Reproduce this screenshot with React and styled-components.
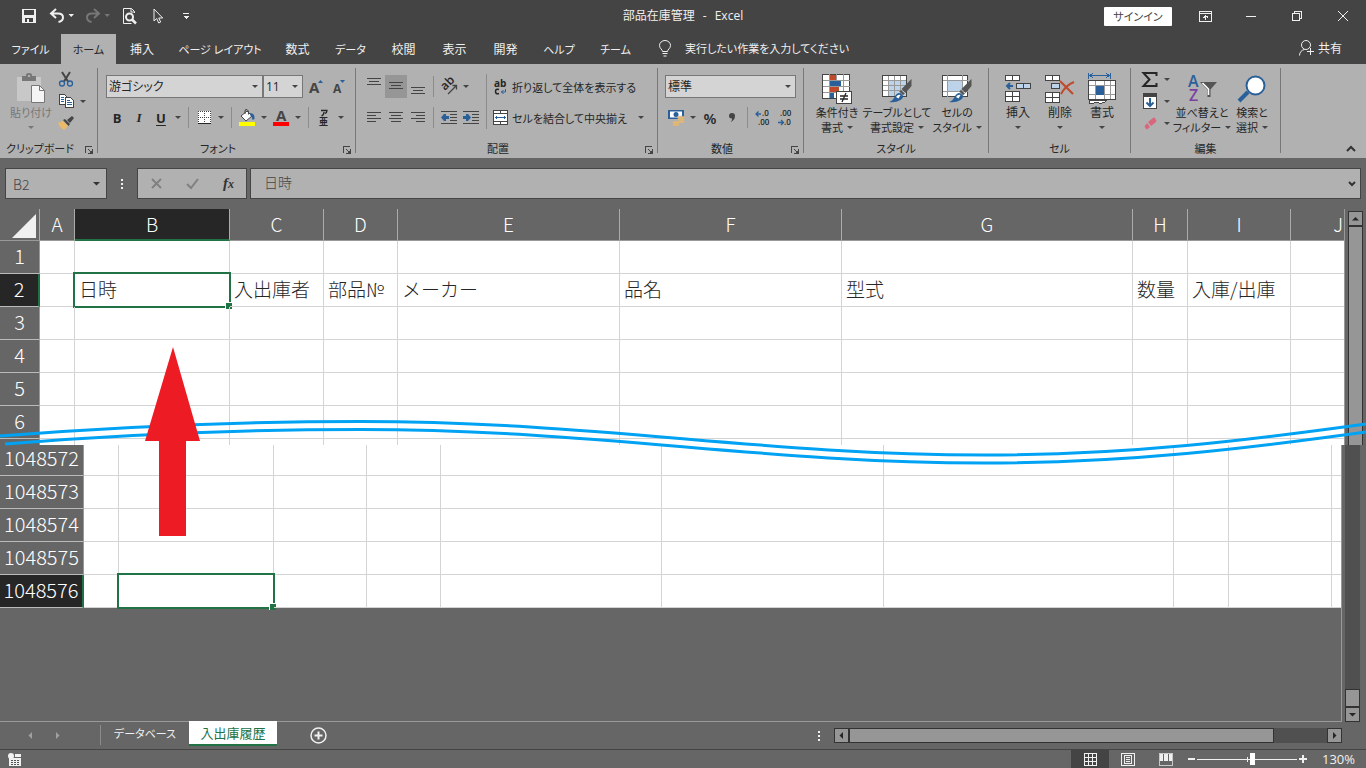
import React from 'react';
import styled, { createGlobalStyle } from 'styled-components';

const GlobalStyle = createGlobalStyle`
  * {
    box-sizing: border-box;
  }

  body {
    margin: 0;
    background: #666666;
  }

  body, button, input, select {
    font-family: 'Open Sans', 'Noto Sans CJK JP', sans-serif;
    font-size: 12px;
    font-feature-settings: 'palt';
  }

  button, input, select {
    margin: 0;
    padding: 0;
    border: 0;
    color: inherit;
    background: none;
  }

  svg {
    display: block;
    flex: none;
    overflow: visible;
  }
`;

const Window = styled.div`
  display: flex;
  flex-direction: column;
  min-height: 100vh;
  overflow: hidden;
  background: #666666;
  color: #262626;
`;

/* ---------- title bar ---------- */

const TitleBar = styled.header`
  display: grid;
  grid-template-columns: 1fr auto 1fr;
  align-items: center;
  height: 32px;
  background: #444444;
  color: #f0f0f0;
`;

const QuickAccess = styled.div`
  display: flex;
  padding-left: 14px;
`;

const QuickButton = styled.button`
  display: flex;
  align-items: center;
  justify-content: center;
  width: ${(props) => props.$w || 28}px;
  height: 32px;
`;

const Title = styled.h1`
  display: flex;
  gap: 8px;
  margin: 0;
  font-size: 12px;
  font-weight: 400;
  line-height: 16px;
`;

const WindowControls = styled.div`
  display: flex;
  align-items: center;
  justify-content: flex-end;
`;

const SignIn = styled.button`
  width: 68px;
  height: 19px;
  margin-right: 10px;
  border-radius: 1px;
  background: #ffffff;
  color: #444444;
  font-size: 11px;
  line-height: 19px;
`;

const WindowButton = styled(QuickButton)`
  width: 46px;
`;

/* ---------- ribbon tabs ---------- */

const TabRow = styled.nav`
  display: flex;
  height: 32px;
  background: #444444;
  color: #f0f0f0;
`;

const Tab = styled.button`
  display: flex;
  flex: none;
  align-items: center;
  justify-content: center;
  width: ${(props) => props.$w}px;
  height: 30px;
  margin-top: 2px;
  padding-bottom: 1px;
  font-size: ${(props) => (props.$kana ? 11 : 12)}px;
  white-space: nowrap;
  background: ${(props) => (props.$active ? '#b1b1b1' : 'none')};
  color: ${(props) => (props.$active ? '#262626' : '#f0f0f0')};
`;

const TellMe = styled.label`
  display: flex;
  align-items: center;
  gap: 14px;
  padding-left: 15px;

  input {
    width: 200px;
    outline: none;
    font-size: 11px;
  }

  input::placeholder {
    color: #f0f0f0;
    opacity: 1;
  }
`;

const Share = styled.button`
  display: flex;
  align-items: center;
  gap: 4px;
  margin-left: auto;
  margin-right: 24px;
`;

/* ---------- ribbon ---------- */

const Ribbon = styled.section`
  display: flex;
  height: 94px;
  padding-top: 4px;
  background: #b1b1b1;
`;

const Group = styled.div`
  display: grid;
  grid-template-rows: 70px 15px;
  flex: none;
  width: ${(props) => props.$w}px;
  height: 85px;
  border-right: 1px solid #777777;
`;

const GroupBody = styled.div`
  display: flex;
  padding-left: ${(props) => props.$pad || 7}px;
`;

const GroupFooter = styled.div`
  display: flex;
  align-items: center;
  height: 20px;
  font-size: 11px;

  span {
    flex: 1;
    text-align: center;
    white-space: nowrap;
  }
`;

const Launcher = styled.button`
  width: 17px;
  height: 20px;
  padding: 4px 0 0 5px;
`;

const Column = styled.div`
  display: flex;
  flex-direction: column;
  padding-top: ${(props) => (props.$small ? 0 : 3)}px;
`;

const Row = styled.div`
  display: flex;
  align-items: center;
  gap: ${(props) => props.$gap || 0}px;
  height: ${(props) => (props.$small ? 22 : 31)}px;
`;

const Tool = styled.button`
  display: flex;
  flex: none;
  align-items: center;
  justify-content: center;
  width: ${(props) => props.$w || 22}px;
  height: ${(props) => (props.$small ? 22 : 23)}px;
  background: ${(props) => (props.$active ? '#969696' : 'none')};
`;

const CaretButton = styled(Tool)`
  width: 12px;
`;

const Letter = styled.span`
  font-size: ${(props) => (props.$large ? 15 : 13)}px;
  font-weight: ${(props) => (props.$large ? 600 : 700)};
  font-style: ${(props) => (props.$italic ? 'italic' : 'normal')};
  font-family: ${(props) => (props.$italic ? "'Liberation Serif', serif" : 'inherit')};
  text-decoration: ${(props) => (props.$underline ? 'underline' : 'none')};
  text-underline-offset: 2px;
`;

const Separator = styled.i`
  flex: none;
  width: 1px;
  height: 21px;
  margin: 0 4px;
  background: #8c8c8c;
`;

const TallSeparator = styled(Separator)`
  height: 55px;
  margin-top: 6px;
`;

const TextTool = styled.button`
  display: flex;
  align-items: center;
  gap: 4px;
  height: 23px;
  padding-left: 2px;
  font-size: 11px;
  white-space: nowrap;
`;

const BigButton = styled.button`
  display: flex;
  flex: none;
  flex-direction: column;
  align-items: center;
  width: ${(props) => props.$w}px;
  padding-top: 4px;
  color: ${(props) => (props.$disabled ? '#777777' : '#262626')};
  font-size: ${(props) => (props.$kana ? 11 : 12)}px;
  line-height: 15px;
  white-space: nowrap;
`;

const BigIcon = styled.span`
  display: flex;
  align-items: center;
  justify-content: center;
  height: 33px;
`;

const BigLine = styled.span`
  display: flex;
  align-items: center;
  gap: 4px;
  height: 15px;
`;

const SelectBox = styled.label`
  display: grid;
  grid-template-columns: 1fr 14px;
  align-items: center;
  width: ${(props) => props.$w}px;
  height: 23px;
  border: 1px solid #777777;
  background: #d4d4d4;

  select {
    grid-area: 1 / 1 / 2 / 3;
    height: 21px;
    padding-left: 2px;
    appearance: none;
  }

  svg {
    grid-area: 1 / 2 / 2 / 3;
    justify-self: end;
    margin-right: 4px;
    pointer-events: none;
  }
`;

const Collapse = styled.button`
  align-self: flex-end;
  margin: 0 10px 6px auto;
`;

/* ---------- formula bar ---------- */

const FormulaBar = styled.section`
  display: flex;
  height: 51px;
  padding: 10px 5px 0;
`;

const FormulaBox = styled.div`
  display: flex;
  align-items: center;
  width: ${(props) => props.$w};
  flex: ${(props) => (props.$grow ? '1' : 'none')};
  height: 31px;
  margin-left: ${(props) => props.$gap || 0}px;
  border: 1px solid #444444;
  background: #b1b1b1;
  color: #444444;

  input {
    flex: 1;
    min-width: 0;
    outline: none;
    font-family: 'Noto Sans CJK JP', sans-serif;
    font-size: 14px;
    font-weight: 300;
    padding-left: ${(props) => (props.$grow ? 13 : 7)}px;
    padding-bottom: ${(props) => (props.$grow ? 3 : 0)}px;
  }
`;

const FormulaButton = styled.button`
  display: flex;
  align-items: center;
  justify-content: center;
  width: ${(props) => props.$w || 36}px;
  height: 29px;
`;

const Grip = styled.i`
  width: 30px;
  display: flex;
  flex-direction: column;
  align-items: center;
  justify-content: center;
  gap: 2px;
  height: ${(props) => props.$h || 31}px;

  &::before, &::after, b {
    content: '';
    width: 2px;
    height: 2px;
    background: #f0f0f0;
  }
`;

/* ---------- sheet ---------- */

const Sheet = styled.main`
  position: relative;
  display: flex;
  flex: 1;
  flex-direction: column;
`;

const Pane = styled.div`
  display: flex;
  flex: ${(props) => (props.$grow ? '1' : 'none')};
`;

const PaneArea = styled.div`
  flex: 1;
  min-width: 0;
  overflow: hidden;
  height: ${(props) => (props.$h ? `${props.$h}px` : 'auto')};
  border-right: 1px solid #999999;
  border-bottom: ${(props) => (props.$h ? 'none' : '1px solid #999999')};
`;

const TailClip = styled.div`
  display: flex;
  flex-direction: column;
  justify-content: flex-end;
  height: 165px;
  padding-bottom: 2px;
  overflow: hidden;
`;

const Table = styled.table`
  width: 100%;
  table-layout: fixed;
  border-collapse: separate;
  border-spacing: 0;
  background: #ffffff;
  color: #262626;
  font-family: 'Noto Sans CJK JP', sans-serif;
  font-size: 19px;
  font-weight: 300;
  font-feature-settings: normal;
`;

const HeadCell = styled.th`
  height: 32px;
  padding: 0 ${(props) => (props.$last ? 1 : 0)}px ${(props) => (props.$active ? 1 : 2)}px 0;
  overflow: hidden;
  border-right: 1px solid #ababab;
  border-bottom: ${(props) => (props.$active ? '2px solid #217346' : '1px solid #999999')};
  background: ${(props) => (props.$active ? '#262626' : '#666666')};
  color: #ffffff;
  font-weight: 300;
  line-height: 26px;
  text-align: ${(props) => (props.$last ? 'right' : 'center')};

  &:last-child {
    border-right: 0;
  }
`;

const Corner = styled(HeadCell)`
  padding-bottom: 0;

  svg {
    margin: 2px 3px 0 auto;
  }
`;

const RowHead = styled.th`
  height: 33px;
  padding: 0 0 2px;
  border-right: ${(props) => (props.$active ? '2px solid #217346' : '1px solid #999999')};
  border-bottom: 1px solid #bbbbbb;
  background: ${(props) => (props.$active ? '#262626' : '#666666')};
  color: #ffffff;
  font-size: 20px;
  font-weight: 300;
  line-height: 28px;
`;

const Cell = styled.td`
  position: relative;
  height: 33px;
  padding: 0 0 3px 4px;
  border-right: 1px solid #d4d4d4;
  border-bottom: 1px solid #d4d4d4;
  line-height: 28px;
  white-space: nowrap;

  &:last-child {
    border-right: 0;
  }
`;

const Selection = styled.span`
  position: absolute;
  inset: -2px;
  border: 2px solid #217346;

  &::after {
    content: '';
    position: absolute;
    right: -3px;
    bottom: -3px;
    width: 6px;
    height: 6px;
    border-top: 1px solid #ffffff;
    border-left: 1px solid #ffffff;
    background: #217346;
  }
`;

const VerticalBar = styled.div`
  display: flex;
  flex-direction: column;
  width: ${(props) => props.$w}px;
  padding: ${(props) => props.$pad};
`;

const ScrollTrack = styled.div`
  display: flex;
  flex: 1;
  flex-direction: ${(props) => (props.$horizontal ? 'row' : 'column')};
  justify-content: ${(props) => (props.$end ? 'flex-end' : 'flex-start')};
  background: #505050;
`;

const ScrollThumb = styled.div`
  flex: ${(props) => props.$size};
  border: 1px solid #333333;
  border-bottom-width: ${(props) => (props.$open ? 0 : 1)}px;
  background: #969696;
`;

const ScrollButton = styled.button`
  display: flex;
  flex: none;
  align-items: center;
  justify-content: center;
  width: 15px;
  height: 15px;
  border: 1px solid #333333;
  background: #969696;
`;

const Wave = styled.svg`
  position: absolute;
  top: 205px;
  left: 0;
  width: 100%;
  height: 60px;
`;

const Arrow = styled.svg`
  position: absolute;
  top: 138px;
  left: 145px;
`;

/* ---------- sheet tabs and status bar ---------- */

const SheetBar = styled.nav`
  display: flex;
  height: 27px;
  color: #f0f0f0;
`;

const SheetNav = styled.div`
  display: flex;
  align-items: center;
  gap: 20px;
  width: 101px;
  height: 20px;
  margin-top: 3px;
  padding-left: 27px;
  border-right: 1px solid #8c8c8c;
`;

const SheetTab = styled.button`
  position: relative;
  width: 88px;
  height: 25px;
  margin-top: -1px;
  font-size: ${(props) => (props.$active ? 13 : 11)}px;
  white-space: nowrap;
  color: ${(props) => (props.$active ? '#217346' : '#f0f0f0')};
  background: ${(props) => (props.$active ? '#ffffff' : 'none')};
  border-bottom: 2px solid ${(props) => (props.$active ? '#217346' : 'transparent')};
`;

const AddSheet = styled.button`
  display: flex;
  align-items: center;
  justify-content: center;
  width: 82px;
  height: 26px;
`;

const HorizontalBar = styled.div`
  display: flex;
  width: 508px;
  height: 15px;
  margin: 6px 24px 0 0;
`;

const Spacer = styled.i`
  flex: 1;
`;

const StatusBar = styled.footer`
  display: flex;
  align-items: center;
  height: 19px;
  border-top: 1px solid #444444;
  padding: 0 11px 0 8px;
  color: #f0f0f0;
`;

const ViewButton = styled.button`
  display: flex;
  align-items: center;
  justify-content: center;
  width: 38px;
  height: 18px;
  background: ${(props) => (props.$active ? '#444444' : 'none')};
`;

const ZoomButton = styled.button`
  width: 12px;
  height: 18px;
  display: flex;
  align-items: center;
  justify-content: center;
`;

const ZoomSlider = styled.input`
  width: 100px;
  height: 18px;
  appearance: none;
  background:
    linear-gradient(#f0f0f0, #f0f0f0) 50% 50% / 1px 5px no-repeat,
    linear-gradient(#f0f0f0, #f0f0f0) 50% 50% / 100% 1px no-repeat;

  &::-webkit-slider-thumb {
    appearance: none;
    width: 5px;
    height: 12px;
    background: #ffffff;
  }
`;

const ZoomValue = styled.button`
  width: 46px;
  font-size: 13px;
  line-height: 18px;
  text-align: right;
`;

/* ---------- icons ---------- */

const Icon = ({ w, h, smooth, children }) => (
  <svg
    width={w}
    height={h}
    viewBox={`0 0 ${w} ${h}`}
    fill="none"
    shapeRendering={smooth ? 'auto' : 'crispEdges'}
    aria-hidden="true"
  >
    {children}
  </svg>
);

const Caret = ({ color = '#444444' }) => (
  <Icon w={6} h={3} smooth><path d="M0 0h6L3 3z" fill={color} /></Icon>
);

const SaveIcon = () => (
  <Icon w={14} h={14}>
    <path d="M0 0h14v14H0zM2 1v5h10V1zM3 9v4h2v-3h2v3h4V9z" fill="#f0f0f0" fillRule="evenodd" />
  </Icon>
);

const UndoIcon = ({ color, flip }) => (
  <Icon w={24} h={14} smooth>
    <g transform={flip ? 'matrix(-1 0 0 1 14 0)' : undefined}>
      <path d="M6 0L1 4.500l5 4.500M1.500 4.500H8c3.500 0 5 1.500 5 4s-2 4-4.500 4.500" stroke={color} strokeWidth="2" />
    </g>
    <path d="M18.500 5h5.500l-2.750 3z" fill={color} />
  </Icon>
);

const PreviewIcon = () => (
  <Icon w={15} h={16} smooth>
    <path d="M11.500 5V3.500L8.500.500h-8v15h8M8 .500V4h3.500" stroke="#f0f0f0" />
    <circle cx="6.500" cy="9" r="3.500" stroke="#f0f0f0" strokeWidth="2" />
    <path d="M9 11.500l4 4" stroke="#f0f0f0" strokeWidth="2.500" />
  </Icon>
);

const PointerIcon = () => (
  <Icon w={11} h={16} smooth>
    <path d="M1 1v12l2.700-2.500 2 4.500 2-1-2-4h4z" stroke="#f0f0f0" />
  </Icon>
);

const MoreIcon = () => (
  <Icon w={6} h={6}><path d="M0 0h6v1H0zM0 3h6L3 6z" fill="#f0f0f0" /></Icon>
);

const RibbonIcon = () => (
  <Icon w={13} h={11}>
    <path d="M.500.500h12v10H.500zM0 2.500h13M6.500 4v5M4 6.500h1v-1h3v1h1" stroke="#f0f0f0" />
  </Icon>
);

const BulbIcon = () => (
  <Icon w={12} h={17} smooth>
    <path d="M3.500 11.500c0-2-3-3-3-6a5.500 5 0 0 1 11 0c0 3-3 4-3 6zM3.500 13.500h5M4.500 16h3" stroke="#f0f0f0" />
  </Icon>
);

const ShareIcon = () => (
  <Icon w={15} h={16} smooth>
    <circle cx="7" cy="5" r="4.500" stroke="#f0f0f0" />
    <path d="M.500 15.500c0-3 2-5.500 5-6M11.500 8v7M8 11.500h7" stroke="#f0f0f0" />
  </Icon>
);

const LauncherIcon = () => (
  <Icon w={8} h={8}>
    <path d="M.500 7V.500H7M3 3l3 3M7.500 3v4.500H3" stroke="#444444" />
    <path d="M4 7h3V4z" fill="#444444" />
  </Icon>
);

const PasteIcon = () => (
  <Icon w={28} h={31} smooth>
    <path d="M0 4h24v24H0z" fill="#c8c8c8" />
    <path d="M5 3h4V2q0-2 3-2t3 2v1h4v5H5zM11 2h2v2h-2z" fill="#777777" fillRule="evenodd" />
    <path d="M14.500 12.500h8l5 5v12h-13z" fill="#f5f5f5" stroke="#777777" />
    <path d="M22.500 12.500v5h5" stroke="#777777" />
  </Icon>
);

const CutIcon = () => (
  <Icon w={14} h={15} smooth>
    <path d="M3 0l6 9.500M11 0L5 9.500" stroke="#444444" strokeWidth="2" />
    <circle cx="3" cy="11.500" r="2.500" stroke="#2a6099" strokeWidth="1.300" />
    <circle cx="11" cy="11.500" r="2.500" stroke="#2a6099" strokeWidth="1.300" />
  </Icon>
);

const CopyIcon = () => (
  <Icon w={15} h={14}>
    <path d="M.500.500h5l3 3v7h-8z" fill="#ffffff" stroke="#444444" />
    <path d="M2 3.500h3M2 5.500h3M2 7.500h3" stroke="#2a6099" />
    <path d="M6.500 3.500h5l3 3v7h-8z" fill="#ffffff" stroke="#444444" />
    <path d="M8 6.500h3M8 8.500h5M8 10.500h5" stroke="#2a6099" />
  </Icon>
);

const PainterIcon = () => (
  <Icon w={16} h={14} smooth>
    <path d="M0 7l5-2 5 5-4 4q-4-2-6-7z" fill="#ebb969" />
    <path d="M5 4l2-1 5 5-1.500 2zM9 4l5-4 2 2-4 5z" fill="#444444" />
  </Icon>
);

const GrowIcon = ({ shrink }) => (
  <Icon w={14} h={16} smooth>
    <text
      x={shrink ? 1 : 0}
      y="14"
      fill="#444444"
      fontFamily="Open Sans, sans-serif"
      fontWeight="700"
      fontSize={shrink ? 12 : 15}
    >
      A
    </text>
    <path d={shrink ? 'M8 1h5l-2.500 3z' : 'M9 4h5l-2.500-3z'} fill="#2a6099" />
  </Icon>
);

const BorderIcon = () => (
  <Icon w={13} h={13}>
    <path d="M0 0h13v13H0z" fill="#ffffff" />
    <path d="M0 .500h13M0 6.500h13M.500 0v13M6.500 0v13M12.500 0v13" stroke="#444444" strokeDasharray="1 1" />
    <path d="M0 12.500h13" stroke="#262626" />
  </Icon>
);

const FillIcon = () => (
  <Icon w={16} h={17} smooth>
    <path d="M2 7l6-5 5 5-6 5z" fill="#ffffff" stroke="#444444" />
    <path d="M6 5V2q0-2 2-1.500t1.500 5" stroke="#444444" />
    <path d="M11 4q5 0 4.500 6l-2 1q0-3-2-4z" fill="#2a6099" />
    <path d="M0 13h16v4H0z" fill="#ffff00" />
  </Icon>
);

const FontColorIcon = () => (
  <Icon w={16} h={17} smooth>
    <text x="3" y="12" fill="#444444" fontFamily="Open Sans, sans-serif" fontWeight="700" fontSize="15">A</text>
    <path d="M0 13h16v4H0z" fill="#ff0000" />
  </Icon>
);

const PhoneticIcon = () => (
  <Icon w={10} h={17} smooth>
    <path d="M2 1.500h6q0 2-2 3M5 3q0 3-2.500 4" stroke="#262626" strokeWidth="1.300" />
    <text x="0" y="16" fill="#262626" fontFamily="Noto Sans CJK JP" fontWeight="700" fontSize="9">亜</text>
  </Icon>
);

const LINES = {
  top: 'M0 0.500h14M2 3.500h10M0 6.500h14',
  middle: 'M0 4.500h14M2 7.500h10M0 10.500h14',
  bottom: 'M0 9.500h14M2 12.500h10M0 15.500h14',
  left: 'M0 3.500h14M0 6.500h9M0 9.500h14M0 12.500h9',
  center: 'M0 3.500h14M2 6.500h10M0 9.500h14M2 12.500h10',
  right: 'M0 3.500h14M5 6.500h9M0 9.500h14M5 12.500h9',
};

const AlignIcon = ({ kind }) => (
  <Icon w={14} h={17}><path d={LINES[kind]} stroke="#444444" /></Icon>
);

const OrientationIcon = () => (
  <Icon w={17} h={16} smooth>
    <text
      x="0"
      y="0"
      transform="translate(4 12) rotate(-45)"
      fill="#262626"
      fontFamily="Open Sans, sans-serif"
      fontWeight="600"
      fontSize="12"
    >
      ab
    </text>
    <path d="M7 15l8-8M11.500 6.500H15.500V10.500" stroke="#444444" strokeWidth="1.300" />
  </Icon>
);

const IndentIcon = ({ right }) => (
  <Icon w={16} h={13}>
    <path d="M0 .500h16M9 3.500h7M9 6.500h7M9 9.500h7M0 12.500h16" stroke="#444444" />
    <path
      d={right ? 'M0 5h3V3h2l3 3.500L5 10H3V8H0z' : 'M8 5H5V3H3L0 6.500 3 10h2V8h3z'}
      fill="#2a6099"
      shapeRendering="auto"
    />
  </Icon>
);

const WrapIcon = () => (
  <Icon w={15} h={16} smooth>
    <text x="1" y="8" fill="#262626" fontFamily="Open Sans, sans-serif" fontWeight="700" fontSize="10">ab</text>
    <path d="M6 10.500q-3.500-1-3.500 2t3.500 2" stroke="#262626" strokeWidth="1.500" />
    <path d="M12.500 10v3H8M10.500 11l-2 2 2 2" stroke="#2a6099" />
  </Icon>
);

const MergeIcon = () => (
  <Icon w={15} h={15}>
    <path d="M.500.500h14v14H.500z" fill="#ffffff" stroke="#444444" />
    <path d="M0 3.500h15M0 11.500h15M7.500 0v4M7.500 11v4" stroke="#444444" />
    <path d="M2 7.500h11" stroke="#2a6099" />
    <path d="M2 7.500l2-2v4zM13 7.500l-2-2v4z" fill="#2a6099" />
  </Icon>
);

const MoneyIcon = () => (
  <Icon w={17} h={17} smooth>
    <path d="M0 1h16v9H0z" fill="#2a6099" />
    <path d="M2 2.500h12v6H2z" fill="#ffffff" />
    <circle cx="8" cy="5.500" r="2.500" fill="#2a6099" />
    <g fill="#ebb969" stroke="#b1b1b1" strokeWidth=".500">
      <ellipse cx="13" cy="12.500" rx="3.500" ry="1.500" />
      <ellipse cx="13" cy="10.500" rx="3.500" ry="1.500" />
      <ellipse cx="13" cy="8.500" rx="3.500" ry="1.500" />
      <ellipse cx="8" cy="15.500" rx="3.500" ry="1.500" />
      <ellipse cx="8" cy="13.500" rx="3.500" ry="1.500" />
    </g>
  </Icon>
);

const DecimalIcon = ({ less }) => (
  <Icon w={16} h={16} smooth>
    <g fill="#262626" fontFamily="Open Sans, sans-serif" fontWeight="600" fontSize="8">
      <text x={less ? 3 : 7} y="6">{less ? '.00' : '.0'}</text>
      <text x={less ? 7 : 3} y="15">{less ? '.0' : '.00'}</text>
    </g>
    <path
      d={less ? 'M1 12.500h5M4 10l2.500 2.500L4 15' : 'M1 4h5M3.500 1.500L1 4l2.500 2.500'}
      stroke="#2a6099"
      strokeWidth="1.300"
    />
  </Icon>
);

const ConditionalIcon = () => (
  <Icon w={31} h={30}>
    <path d="M.500.500h27v24H.500z" fill="#ffffff" stroke="#444444" />
    <path d="M.500 6.500h27M.500 12.500h27M.500 18.500h27M7.500 0v24M14.500 0v24M21.500 0v24" stroke="#999999" />
    <path d="M8 1h6v5H8zM8 13h9v5H8z" fill="#c0492b" />
    <path d="M8 7h11v5H8zM8 19h4v5H8z" fill="#2a6099" />
    <path d="M14.500 17.500h15v12h-15z" fill="#ffffff" stroke="#444444" />
    <path d="M18 22h8M18 25h8M24 19l-4 9" stroke="#262626" strokeWidth="1.300" shapeRendering="auto" />
  </Icon>
);

const Brush = () => (
  <g shapeRendering="auto">
    <path d="M29.500 4v7l-6 7-4-4z" fill="#555555" />
    <path d="M19 14.500l4 4-2 2-4-4z" fill="#555555" stroke="#d4d4d4" strokeWidth=".500" />
    <path d="M7 27q4-1 6-6 3-5 6.500-2t-1 6q-5 3-11.500 2z" fill="#2a6099" />
    <path d="M14 22q2-3 4.500-2l-2 3.500z" fill="#ffffff" />
  </g>
);

const TableStyleIcon = () => (
  <Icon w={30} h={28}>
    <path d="M.500.500h24v21H.500z" fill="#ffffff" stroke="#444444" />
    <path d="M7 6h17v15H7z" fill="#bdd3ea" />
    <path d="M.500 5.500h24M.500 10.500h24M.500 15.500h24M6.500 0v22M12.500 0v22M18.500 0v22" stroke="#999999" />
    <path d="M.500.500h24v21H.500z" stroke="#444444" />
    <Brush />
  </Icon>
);

const CellStyleIcon = () => (
  <Icon w={30} h={28}>
    <path d="M.500.500h25v21H.500z" fill="#ffffff" stroke="#444444" />
    <path d="M.500 5.500h25M.500 16.500h25M5.500 0v22M20.500 0v22" stroke="#999999" />
    <path d="M6 6h14v10H6z" fill="#bdd3ea" />
    <Brush />
  </Icon>
);

const InsertIcon = () => (
  <Icon w={27} h={28}>
    <path d="M.500.500h14v5H.500zM.500 16.500h14v10H.500z" fill="#ffffff" stroke="#444444" />
    <path d="M7.500 0v6M7.500 16v11M0 21.500h15" stroke="#444444" />
    <path d="M11.500 8.500h14v5h-14zM18.500 8v6" fill="#bdd3ea" stroke="#444444" />
    <path d="M8 11H2M5 8l-3 3 3 3" stroke="#2a6099" strokeWidth="2" shapeRendering="auto" />
  </Icon>
);

const DeleteIcon = () => (
  <Icon w={30} h={28}>
    <path d="M.500.500h14v5H.500zM.500 17.500h14v10H.500z" fill="#ffffff" stroke="#444444" />
    <path d="M7.500 0v6M7.500 17v11M0 22.500h15" stroke="#444444" />
    <path d="M6.500 8.500h8v5h-8z" fill="#bdd3ea" stroke="#444444" />
    <path d="M15 6l13 13M29 7q-8 3-13 12" stroke="#c0492b" strokeWidth="2" shapeRendering="auto" />
  </Icon>
);

const FormatIcon = () => (
  <Icon w={28} h={31}>
    <path d="M.500 0v6M22.500 0v6M2 2.500h19M5 0L2 2.500 5 5M18 0l3 2.500L18 5" stroke="#2a6099" />
    <path d="M.500 7.500h27v19H.500z" fill="#ffffff" />
    <path d="M.500 12.500h27M.500 21.500h27M7.500 7v20M16.500 7v20M22.500 7v20" stroke="#999999" />
    <path d="M.500 7.500h27v19H.500z" stroke="#444444" />
    <path d="M8 13h8v9H8z" fill="#2a6099" />
    <path d="M1 27h18q-2 3-5 3h-3l-2-1q-1 1-3 1H1z" fill="#ffffff" stroke="#444444" />
  </Icon>
);

const SumIcon = () => (
  <Icon w={16} h={15} smooth>
    <path d="M14.500 4V1H1.500l6 6.500-6 6.500h13v-3" stroke="#262626" strokeWidth="2" />
  </Icon>
);

const FillDownIcon = () => (
  <Icon w={14} h={16}>
    <path d="M.500.500h13v15H.500z" fill="#ffffff" stroke="#444444" />
    <path d="M0 0h14v4H0z" fill="#444444" />
    <path d="M7 5v8M3.500 9.500L7 13l3.500-3.500" stroke="#2a6099" strokeWidth="2" shapeRendering="auto" />
  </Icon>
);

const EraserIcon = () => (
  <Icon w={13} h={13} smooth>
    <path d="M4 5l5-4q1-1 2 0l1 2q1 1 0 2l-5 4z" fill="#d9677c" />
    <path d="M3 6l3 4-3 2.500q-1 0-2.500-3z" fill="#d9677c" />
  </Icon>
);

const SortIcon = () => (
  <Icon w={29} h={29} smooth>
    <g fontFamily="Open Sans, sans-serif" fontWeight="600" fontSize="16">
      <text x="0" y="13" fill="#2a6099">A</text>
      <text x="1" y="27" fill="#7b3fa0">Z</text>
    </g>
    <path d="M12 8h17l-6.500 7.500V23h-3v-7.500z" fill="#555555" />
    <path d="M14.500 9l6 6v6" stroke="#ffffff" strokeWidth="1.500" />
  </Icon>
);

const FindIcon = () => (
  <Icon w={28} h={28} smooth>
    <path d="M10 17l-9 9" stroke="#2a6099" strokeWidth="4" />
    <circle cx="17.500" cy="10.500" r="9" fill="#ffffff" stroke="#2a6099" strokeWidth="2" />
  </Icon>
);

const Triangle = ({ d, color = '#262626' }) => (
  <Icon w={7} h={7} smooth><path d={d} fill={color} /></Icon>
);

const UP = 'M0 5.500L3.500 2 7 5.500z';
const DOWN = 'M0 2h7L3.500 5.500z';
const LEFT = 'M5 0v7L1.500 3.500z';
const RIGHT = 'M2 0v7l3.500-3.500z';

/* ---------- data ---------- */

const RIBBON_TABS = [
  { label: 'ファイル', w: 61, kana: true },
  { label: 'ホーム', w: 55, kana: true, active: true },
  { label: '挿入', w: 52 },
  { label: 'ページ レイアウト', w: 104, kana: true },
  { label: '数式', w: 51 },
  { label: 'データ', w: 55, kana: true },
  { label: '校閲', w: 51 },
  { label: '表示', w: 51 },
  { label: '開発', w: 51 },
  { label: 'ヘルプ', w: 56, kana: true },
  { label: 'チーム', w: 57, kana: true },
];

const COLUMNS = ['A', 'B', 'C', 'D', 'E', 'F', 'G', 'H', 'I', 'J'];
const TOP_WIDTHS = [40, 35, 155, 94, 74, 222, 222, 291, 55, 103];
const TAIL_WIDTHS = [84, 35, 155, 93, 74, 221, 222, 290, 55, 103];
const FIELDS = {
  B: '日時',
  C: '入出庫者',
  D: '部品№',
  E: 'メーカー',
  F: '品名',
  G: '型式',
  H: '数量',
  I: '入庫/出庫',
};

/* ---------- parts ---------- */

const RibbonGroup = ({ label, w, pad, launcher, children }) => (
  <Group $w={w}>
    <GroupBody $pad={pad}>{children}</GroupBody>
    <GroupFooter>
      <span>{label}</span>
      {launcher && <Launcher aria-label={label}><LauncherIcon /></Launcher>}
    </GroupFooter>
  </Group>
);

const Drop = ({ small, color }) => (
  <CaretButton $small={small}><Caret color={color} /></CaretButton>
);

const BigTool = ({ icon, first, second, w, kana, disabled }) => (
  <BigButton $w={w} $kana={kana} $disabled={disabled}>
    <BigIcon>{icon}</BigIcon>
    <BigLine>{first}</BigLine>
    <BigLine>
      {second}
      <Caret color={disabled ? '#777777' : '#444444'} />
    </BigLine>
  </BigButton>
);

const Dropdown = ({ w, label, value }) => (
  <SelectBox $w={w}>
    <select aria-label={label} defaultValue={value}>
      <option>{value}</option>
    </select>
    <Caret />
  </SelectBox>
);

const GridRow = ({ number, active, values = {} }) => (
  <tr>
    <RowHead scope="row" $active={active}>{number}</RowHead>
    {COLUMNS.map((column) => (
      <Cell key={column}>
        {values[column]}
        {active && column === 'B' && <Selection />}
      </Cell>
    ))}
  </tr>
);

const Widths = ({ list }) => (
  <colgroup>
    {list.map((width, index) => <col key={index} width={width} />)}
    <col />
  </colgroup>
);

const App = () => {
  return (
    <Window>
      <GlobalStyle />

      <TitleBar>
        <QuickAccess>
          <QuickButton $w={30} aria-label="上書き保存"><SaveIcon /></QuickButton>
          <QuickButton $w={36} aria-label="元に戻す"><UndoIcon color="#f0f0f0" /></QuickButton>
          <QuickButton $w={36} aria-label="やり直し"><UndoIcon color="#777777" flip /></QuickButton>
          <QuickButton aria-label="印刷プレビュー"><PreviewIcon /></QuickButton>
          <QuickButton aria-label="選択"><PointerIcon /></QuickButton>
          <QuickButton aria-label="カスタマイズ"><MoreIcon /></QuickButton>
        </QuickAccess>
        <Title>
          <span>部品在庫管理</span>
          <span>-</span>
          <span>Excel</span>
        </Title>
        <WindowControls>
          <SignIn>サインイン</SignIn>
          <WindowButton aria-label="リボンの表示オプション"><RibbonIcon /></WindowButton>
          <WindowButton aria-label="最小化">
            <Icon w={10} h={1}><path d="M0 0h10v1H0z" fill="#f0f0f0" /></Icon>
          </WindowButton>
          <WindowButton aria-label="元に戻す">
            <Icon w={10} h={10}><path d="M.500 2.500h7v7h-7zM2.500 2V.500h7v7H8" stroke="#f0f0f0" /></Icon>
          </WindowButton>
          <WindowButton aria-label="閉じる">
            <Icon w={10} h={10} smooth><path d="M0 0l10 10M10 0L0 10" stroke="#f0f0f0" /></Icon>
          </WindowButton>
        </WindowControls>
      </TitleBar>

      <TabRow>
        {RIBBON_TABS.map((tab) => (
          <Tab key={tab.label} $w={tab.w} $kana={tab.kana} $active={tab.active}>{tab.label}</Tab>
        ))}
        <TellMe>
          <BulbIcon />
          <input aria-label="操作アシスト" placeholder="実行したい作業を入力してください" />
        </TellMe>
        <Share><ShareIcon />共有</Share>
      </TabRow>

      <Ribbon>
        <RibbonGroup label="クリップボード" w={98} launcher>
          <BigTool w={48} icon={<PasteIcon />} first="貼り付け" kana disabled />
          <Column $small>
            <Row $small><Tool $small aria-label="切り取り"><CutIcon /></Tool></Row>
            <Row $small><Tool $small aria-label="コピー"><CopyIcon /></Tool><Drop small /></Row>
            <Row $small><Tool $small aria-label="書式のコピー"><PainterIcon /></Tool></Row>
          </Column>
        </RibbonGroup>

        <RibbonGroup label="フォント" w={258} pad={8} launcher>
          <Column>
            <Row>
              <Dropdown w={157} label="フォント" value="游ゴシック" />
              <Dropdown w={40} label="フォント サイズ" value="11" />
              <Tool $w={25} aria-label="拡大"><GrowIcon /></Tool>
              <Tool aria-label="縮小"><GrowIcon shrink /></Tool>
            </Row>
            <Row>
              <Tool><Letter>B</Letter></Tool>
              <Tool><Letter $italic>I</Letter></Tool>
              <Tool><Letter $underline>U</Letter></Tool>
              <Drop />
              <Separator />
              <Tool aria-label="罫線"><BorderIcon /></Tool>
              <Drop />
              <Separator />
              <Tool aria-label="塗りつぶしの色"><FillIcon /></Tool>
              <Drop />
              <Tool aria-label="フォントの色"><FontColorIcon /></Tool>
              <Drop />
              <Separator />
              <Tool aria-label="ふりがな"><PhoneticIcon /></Tool>
              <Drop />
            </Row>
          </Column>
        </RibbonGroup>

        <RibbonGroup label="配置" w={302} launcher>
          <Column>
            <Row>
              <Tool aria-label="上揃え"><AlignIcon kind="top" /></Tool>
              <Tool aria-label="上下中央揃え" $active><AlignIcon kind="middle" /></Tool>
              <Tool aria-label="下揃え"><AlignIcon kind="bottom" /></Tool>
              <Separator />
              <Tool aria-label="方向"><OrientationIcon /></Tool>
              <Drop />
            </Row>
            <Row>
              <Tool aria-label="左揃え"><AlignIcon kind="left" /></Tool>
              <Tool aria-label="中央揃え"><AlignIcon kind="center" /></Tool>
              <Tool aria-label="右揃え"><AlignIcon kind="right" /></Tool>
              <Separator />
              <Tool aria-label="インデントを減らす"><IndentIcon /></Tool>
              <Tool aria-label="インデントを増やす"><IndentIcon right /></Tool>
            </Row>
          </Column>
          <TallSeparator />
          <Column>
            <Row><TextTool><WrapIcon />折り返して全体を表示する</TextTool></Row>
            <Row $gap={8}>
              <TextTool><MergeIcon />セルを結合して中央揃え</TextTool>
              <Drop />
            </Row>
          </Column>
        </RibbonGroup>

        <RibbonGroup label="数値" w={146} launcher>
          <Column>
            <Row><Dropdown w={131} label="表示形式" value="標準" /></Row>
            <Row>
              <Tool aria-label="通貨表示形式"><MoneyIcon /></Tool>
              <Drop />
              <Tool><Letter $large>%</Letter></Tool>
              <Tool aria-label="桁区切り">
                <Icon w={6} h={9} smooth><path d="M0 3a3 3 0 0 1 6 0q0 4-4.500 6 2-2 1.500-3.500A3 2.500 0 0 1 0 3" fill="#444444" /></Icon>
              </Tool>
              <Separator />
              <Tool aria-label="小数点以下の表示桁数を増やす"><DecimalIcon /></Tool>
              <Tool aria-label="小数点以下の表示桁数を減らす"><DecimalIcon less /></Tool>
            </Row>
          </Column>
        </RibbonGroup>

        <RibbonGroup label="スタイル" w={185} pad={3}>
          <BigTool w={60} icon={<ConditionalIcon />} first="条件付き" second="書式" kana />
          <BigTool w={60} icon={<TableStyleIcon />} first="テーブルとして" second="書式設定" kana />
          <BigTool w={60} icon={<CellStyleIcon />} first="セルの" second="スタイル" kana />
        </RibbonGroup>

        <RibbonGroup label="セル" w={142} pad={8}>
          <BigTool w={42} icon={<InsertIcon />} first="挿入" />
          <BigTool w={42} icon={<DeleteIcon />} first="削除" />
          <BigTool w={42} icon={<FormatIcon />} first="書式" />
        </RibbonGroup>

        <RibbonGroup label="編集" w={150} pad={8}>
          <Column $small>
            <Row $small><Tool $small aria-label="合計"><SumIcon /></Tool><Drop small /></Row>
            <Row $small><Tool $small aria-label="フィル"><FillDownIcon /></Tool><Drop small /></Row>
            <Row $small><Tool $small aria-label="クリア"><EraserIcon /></Tool><Drop small /></Row>
          </Column>
          <BigTool w={58} icon={<SortIcon />} first="並べ替えと" second="フィルター" kana />
          <BigTool w={42} icon={<FindIcon />} first="検索と" second="選択" kana />
        </RibbonGroup>

        <Collapse aria-label="リボンを折りたたむ">
          <Icon w={10} h={6} smooth><path d="M1 5l4-4 4 4" stroke="#333333" strokeWidth="2" /></Icon>
        </Collapse>
      </Ribbon>

      <FormulaBar>
        <FormulaBox $w="102px">
          <input aria-label="名前ボックス" defaultValue="B2" />
          <FormulaButton $w={20} aria-label="名前の一覧"><Triangle d={DOWN} color="#333333" /></FormulaButton>
        </FormulaBox>
        <Grip><b /></Grip>
        <FormulaBox $w="110px">
          <FormulaButton aria-label="キャンセル">
            <Icon w={11} h={11} smooth><path d="M1 1l9 9M10 1l-9 9" stroke="#808080" strokeWidth="2" /></Icon>
          </FormulaButton>
          <FormulaButton aria-label="入力">
            <Icon w={13} h={11} smooth><path d="M1 6l4 4 7-9" stroke="#808080" strokeWidth="2" /></Icon>
          </FormulaButton>
          <FormulaButton aria-label="関数の挿入">
            <Icon w={14} h={14} smooth>
              <text
                x="2"
                y="11"
                fill="#333333"
                fontFamily="Liberation Serif, serif"
                fontStyle="italic"
                fontWeight="700"
                fontSize="15"
              >
                f<tspan fontSize="12">x</tspan>
              </text>
            </Icon>
          </FormulaButton>
        </FormulaBox>
        <FormulaBox $grow $gap={3}>
          <input aria-label="数式バー" defaultValue="日時" />
          <FormulaButton $w={16} aria-label="数式バーの展開">
            <Icon w={8} h={6} smooth><path d="M1 1l3 3 3-3" stroke="#333333" strokeWidth="2" /></Icon>
          </FormulaButton>
        </FormulaBox>
      </FormulaBar>

      <Sheet>
        <Pane>
          <PaneArea $h={236}>
            <Table>
              <Widths list={TOP_WIDTHS} />
              <thead>
                <tr>
                  <Corner aria-label="すべて選択">
                    <Icon w={24} h={24} smooth><path d="M24 0v24H0z" fill="#f0f0f0" /></Icon>
                  </Corner>
                  {COLUMNS.map((column) => (
                    <HeadCell key={column} scope="col" $active={column === 'B'} $last={column === 'J'}>
                      {column}
                    </HeadCell>
                  ))}
                </tr>
              </thead>
              <tbody>
                {[1, 2, 3, 4, 5, 6, ''].map((number) => (
                  <GridRow
                    key={number}
                    number={number}
                    active={number === 2}
                    values={number === 2 ? FIELDS : undefined}
                  />
                ))}
              </tbody>
            </Table>
          </PaneArea>
          <VerticalBar $w={21} $pad="2px 3px 0 3px">
            <ScrollButton aria-label="上へ"><Triangle d={UP} /></ScrollButton>
            <ScrollTrack><ScrollThumb $size="1" $open /></ScrollTrack>
          </VerticalBar>
        </Pane>

        <Pane $grow>
          <PaneArea>
            <TailClip>
              <Table>
                <Widths list={TAIL_WIDTHS} />
                <tbody>
                  {[1048572, 1048573, 1048574, 1048575, 1048576].map((number) => (
                    <GridRow key={number} number={number} active={number === 1048576} />
                  ))}
                </tbody>
              </Table>
            </TailClip>
          </PaneArea>
          <VerticalBar $w={24} $pad="0 6px 0 3px">
            <ScrollTrack $end><ScrollThumb $size="0 0 18px" /></ScrollTrack>
            <ScrollButton aria-label="下へ"><Triangle d={DOWN} /></ScrollButton>
          </VerticalBar>
        </Pane>

        <Wave viewBox="0 0 1366 60" preserveAspectRatio="none" fill="none" stroke="#00a2f3" strokeWidth="3">
          <path d="M0 22C130 12 250 7.500 360 7.500 600 7.500 760 41 985 41 1130 41 1250 26 1366 10" />
          <path d="M5 30C130 20 250 15.500 360 15.500 600 15.500 760 49 985 49 1130 49 1250 34 1366 18" />
        </Wave>
        <Arrow width="55" height="189" viewBox="0 0 55 189">
          <path d="M28 0L55 94H41v95H14V94H0z" fill="#ed1c24" />
        </Arrow>
      </Sheet>

      <SheetBar>
        <SheetNav>
          <Triangle d={LEFT} color="#a0a0a0" />
          <Triangle d={RIGHT} color="#a0a0a0" />
        </SheetNav>
        <SheetTab>データベース</SheetTab>
        <SheetTab $active>入出庫履歴</SheetTab>
        <AddSheet aria-label="新しいシート">
          <Icon w={17} h={17} smooth>
            <circle cx="8.500" cy="8.500" r="7.500" stroke="#f0f0f0" strokeWidth="1.500" />
            <path d="M8.500 4.500v8M4.500 8.500h8" stroke="#f0f0f0" strokeWidth="2" />
          </Icon>
        </AddSheet>
        <Spacer />
        <Grip $h={27}><b /></Grip>
        <HorizontalBar>
          <ScrollButton aria-label="左へ"><Triangle d={LEFT} /></ScrollButton>
          <ScrollTrack $horizontal><ScrollThumb $size="0 0 89%" /></ScrollTrack>
          <ScrollButton aria-label="右へ"><Triangle d={RIGHT} /></ScrollButton>
        </HorizontalBar>
      </SheetBar>

      <StatusBar>
        <Icon w={13} h={13}>
          <path d="M7 1h6v3H7zM1 5h12v8H1z" fill="#f0f0f0" />
          <path d="M3 7.500h2M6 7.500h2M9 7.500h2M3 9.500h2M6 9.500h2M9 9.500h2M3 11.500h2M6 11.500h2M9 11.500h2" stroke="#555555" />
          <circle cx="3" cy="3" r="3" fill="#f0f0f0" shapeRendering="auto" />
        </Icon>
        <Spacer />
        <ViewButton $active aria-label="標準">
          <Icon w={13} h={13}>
            <path d="M.500.500h12v12H.500zM0 4.500h13M0 8.500h13M4.500 0v13M8.500 0v13" stroke="#f0f0f0" />
          </Icon>
        </ViewButton>
        <ViewButton aria-label="ページ レイアウト">
          <Icon w={14} h={13}>
            <path d="M.500.500h13v12H.500z" stroke="#f0f0f0" />
            <path d="M3.500 2.500h7v8h-7zM5 4.500h4M5 6.500h4M5 8.500h4" stroke="#f0f0f0" />
          </Icon>
        </ViewButton>
        <ViewButton aria-label="改ページ プレビュー">
          <Icon w={14} h={13}>
            <path d="M.500.500h13v12H.500z" stroke="#c8c8c8" />
            <path d="M1 1h3v7H1zM5 1h4v7H5zM10 1h3v7h-3z" fill="#f0f0f0" />
          </Icon>
        </ViewButton>
        <ZoomButton aria-label="縮小">
          <Icon w={7} h={2}><path d="M0 0h7v2H0z" fill="#f0f0f0" /></Icon>
        </ZoomButton>
        <ZoomSlider type="range" min="0" max="100" defaultValue="56" aria-label="ズーム" />
        <ZoomButton aria-label="拡大">
          <Icon w={8} h={8}><path d="M3 0h2v3h3v2H5v3H3V5H0V3h3z" fill="#f0f0f0" /></Icon>
        </ZoomButton>
        <ZoomValue>130%</ZoomValue>
      </StatusBar>
    </Window>
  );
};

export default App;
